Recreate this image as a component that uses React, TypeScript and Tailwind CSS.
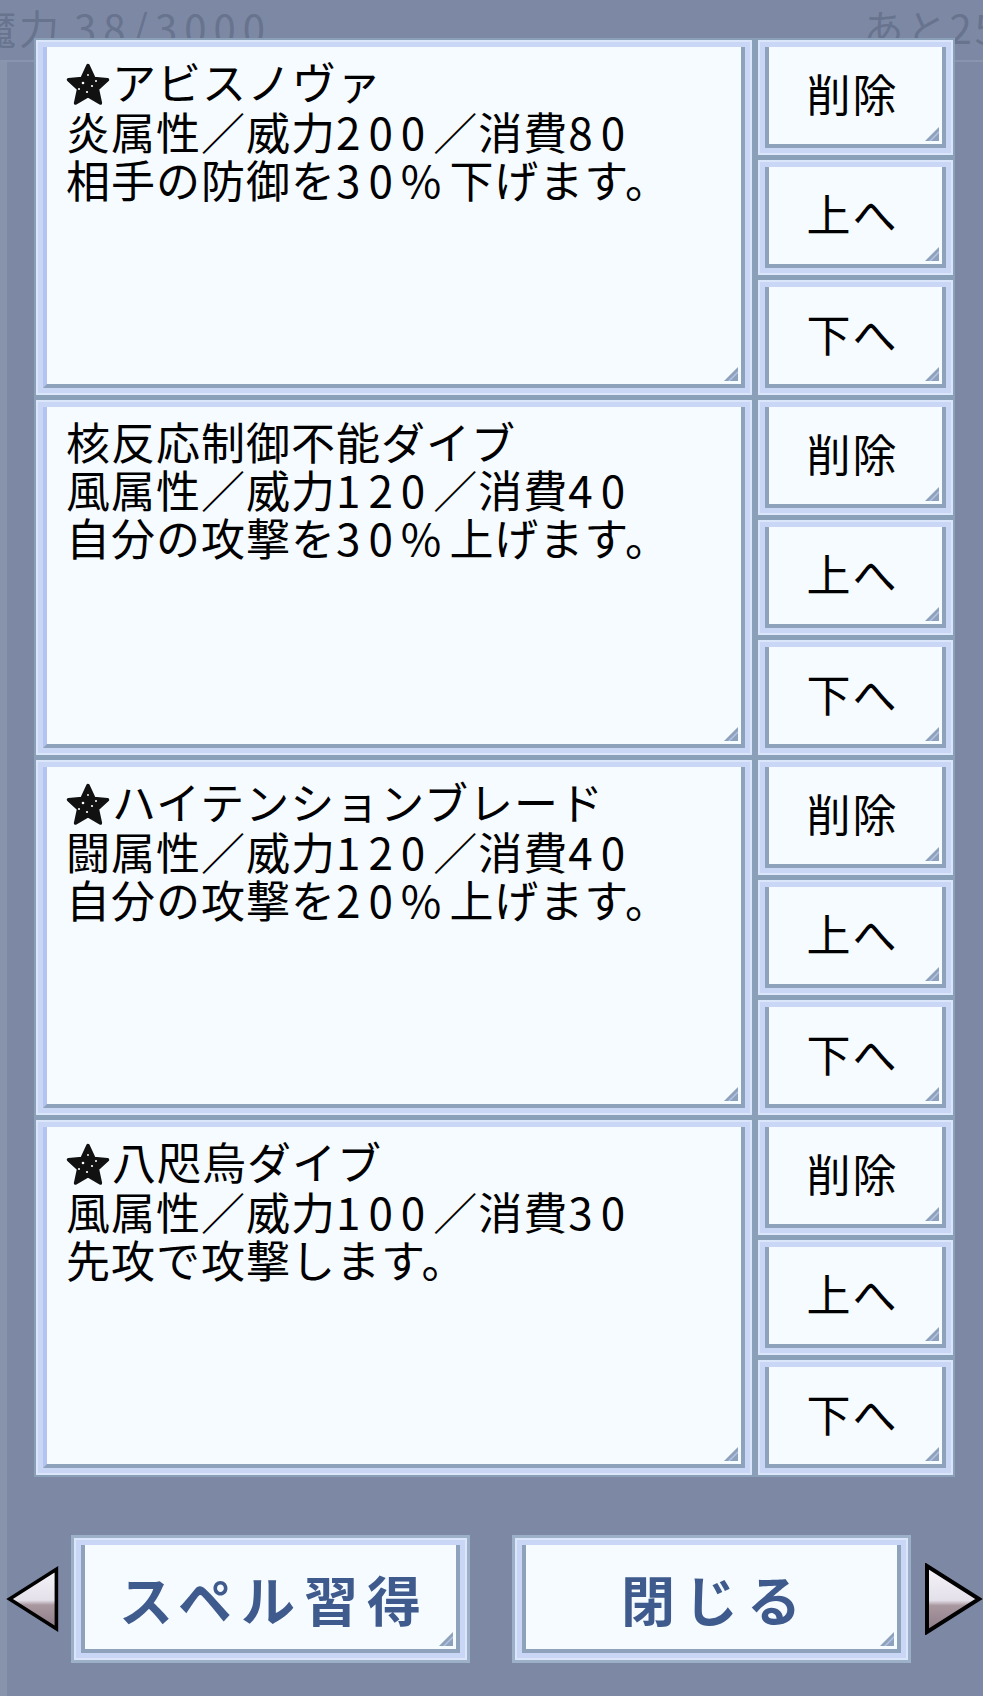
import React from "react";

const spells = [
  { star: true, name: "アビスノヴァ", stat: "炎属性／威力200／消費80", desc: "相手の防御を30%下げます。" },
  { star: false, name: "核反応制御不能ダイブ", stat: "風属性／威力120／消費40", desc: "自分の攻撃を30%上げます。" },
  { star: true, name: "ハイテンションブレード", stat: "闘属性／威力120／消費40", desc: "自分の攻撃を20%上げます。" },
  { star: true, name: "八咫烏ダイブ", stat: "風属性／威力100／消費30", desc: "先攻で攻撃します。" },
];

// digits in the game font are wider than Noto's, so pad them out
const Txt = ({ s }: { s: string }) => (
  <>
    {s.split(/([0-9%]+)/).map((p, i) =>
      /[0-9%]/.test(p) ? (
        <span key={i} className="tracking-[8px]">
          {p}
        </span>
      ) : (
        <React.Fragment key={i}>{p}</React.Fragment>
      )
    )}
  </>
);

const Star = () => (
  <svg width="44" height="44" viewBox="0 0 44 44" className="inline-block align-[-7px] mr-[2px]">
    <path
      d="M22 2.5 L28 15.5 L41.5 16.8 L31.4 26 L34.4 40 L22 32.8 L9.6 40 L12.6 26 L2.5 16.8 L16 15.5 Z"
      fill="#111"
      stroke="#111"
      strokeWidth="3.5"
      strokeLinejoin="round"
    />
    <circle cx="17" cy="20" r="1.3" fill="#fff" />
    <circle cx="26" cy="23" r="1.1" fill="#fff" />
    <circle cx="21" cy="29" r="1.1" fill="#fff" />
    <circle cx="30" cy="18" r="1" fill="#fff" />
    <circle cx="13" cy="26" r="1" fill="#fff" />
    <circle cx="22" cy="12" r="0.9" fill="#fff" />
  </svg>
);

const Grip = () => (
  <svg width="14" height="14" viewBox="0 0 14 14" className="absolute right-[3px] bottom-[3px]">
    <path d="M14 0 L14 14 L0 14 Z" fill="#8ea3bb" />
    <path d="M14 4 L14 6 L6 14 L4 14 Z" fill="#b3c3e6" />
  </svg>
);

const Frame = ({
  children,
  className = "",
  left = "border-l-[#b4c3ef]",
  outer = "",
}: {
  children: React.ReactNode;
  className?: string;
  left?: string;
  outer?: string;
}) => (
  <div className={`${outer} ${className}`}>
    <div className="h-full bg-[#dce6fa] p-[2px]">
      <div className="h-full bg-[#c9d6f6] p-[5px]">
        <div
          className={`relative h-full bg-[#f5fbff] border-l-4 border-r-4 border-b-4 ${left} border-r-[#8ea3bb] border-b-[#8ea3bb]`}
        >
          {children}
          <Grip />
        </div>
      </div>
    </div>
  </div>
);

const SmallButton = ({ label }: { label: string }) => (
  <Frame className="flex-1" left="border-l-[#8ea3bb]">
    <div className="h-full flex items-center justify-center pr-[6px] pb-[6px] text-[44px] leading-none tracking-[2px] text-black">
      {label}
    </div>
  </Frame>
);

const BigButton = ({ label }: { label: string }) => (
  <Frame className="w-[399px] h-[128px]" left="border-l-[#8ea3bb]" outer="bg-[#9cb0c8] p-[3px]">
    <div className="h-full flex items-center justify-center pt-[4px] pl-[8px] text-[54px] leading-none font-bold tracking-[9px] text-[#3f5a8c]">
      {label}
    </div>
  </Frame>
);

const Arrow = ({ dir }: { dir: "left" | "right" }) => (
  <svg width="60" height="72" viewBox="0 0 60 72" className={dir === "right" ? "-scale-x-100" : ""}>
    <defs>
      <linearGradient id={`ag-${dir}`} x1="0" y1="0" x2="0" y2="1">
        <stop offset="0" stopColor="#f6f4fa" />
        <stop offset="0.52" stopColor="#e4e0ea" />
        <stop offset="0.6" stopColor="#a9989f" />
        <stop offset="1" stopColor="#8c7b87" />
      </linearGradient>
    </defs>
    <polygon
      points="4,36 56,3 56,69"
      fill={`url(#ag-${dir})`}
      stroke="#000"
      strokeWidth="4"
      strokeLinejoin="miter"
    />
  </svg>
);

export default function App() {
  return (
    <div className="relative w-[983px] h-[1696px] overflow-hidden bg-[#7d89a4] font-['Noto_Sans_CJK_JP',sans-serif]">
      {/* page underneath the dialog */}
      <div className="h-[62px] border-b-2 border-[#8994ae] flex justify-between items-start text-[40px] leading-none text-[#68738e]">
        <div className="ml-[-24px] mt-[7px] tracking-[3px]">
          魔力 <span className="tracking-[7px]">38/3000</span>
        </div>
        <div className="mr-[-60px] mt-[7px] tracking-[3px] whitespace-nowrap">あと25秒</div>
      </div>
      <div className="absolute left-0 top-[62px] bottom-0 w-[7px] bg-[#8893ac]" />

      {/* dialog */}
      <div className="absolute inset-0 pt-[38px] pl-[34px]">
        <div className="w-[921px] bg-[#8aa0b8] p-[2px] grid grid-cols-[716px_195px] gap-x-[6px] gap-y-[5px] auto-rows-[355px]">
          {spells.map((sp, i) => (
            <React.Fragment key={i}>
              <Frame className="h-full">
                <div className="pt-[10px] pl-[19px] text-[44px] leading-[48px] tracking-[1px] text-black whitespace-nowrap">
                  <div>
                    {sp.star && <Star />}
                    {sp.name}
                  </div>
                  <div>
                    <Txt s={sp.stat} />
                  </div>
                  <div>
                    <Txt s={sp.desc} />
                  </div>
                </div>
              </Frame>
              <div className="flex flex-col gap-[5px] h-full">
                <SmallButton label="削除" />
                <SmallButton label="上へ" />
                <SmallButton label="下へ" />
              </div>
            </React.Fragment>
          ))}
        </div>

        <div className="mt-[58px] ml-[-28px] flex items-center">
          <Arrow dir="left" />
          <div className="ml-[11px]">
            <BigButton label="スペル習得" />
          </div>
          <div className="ml-[42px]">
            <BigButton label="閉じる" />
          </div>
          <div className="ml-[12px]">
            <Arrow dir="right" />
          </div>
        </div>
      </div>
    </div>
  );
}
